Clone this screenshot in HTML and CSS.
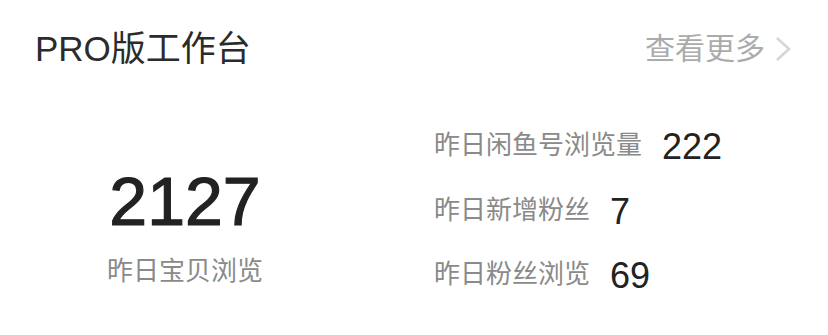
FILE: index.html
```html
<!DOCTYPE html>
<html>
<head>
  <title>PRO版工作台</title>
  <link rel="stylesheet" href="styles.css">
</head>
<body>
  <div class="card">
    <div class="head">
      <h2 class="title">PRO版工作台</h2>
      <a class="more" href="#">查看更多
        <svg class="arrow" width="18" height="26" viewBox="0 0 18 26">
          <path d="M3 2 L15 13 L3 24" fill="none" stroke="#d6d6d6" stroke-width="2.6"/>
        </svg>
      </a>
    </div>

    <div class="main">
      <div class="total">
        <div class="big">2127</div>
        <div class="label">昨日宝贝浏览</div>
      </div>
      <div class="stats">
        <div class="row"><span class="label">昨日闲鱼号浏览量</span><span class="num">222</span></div>
        <div class="row"><span class="label">昨日新增粉丝</span><span class="num">7</span></div>
        <div class="row"><span class="label">昨日粉丝浏览</span><span class="num">69</span></div>
      </div>
    </div>
  </div>
</body>
</html>
```

FILE: styles.css
```css
body {
  margin: 0;
  background-color: #fff;
  font-family: "Liberation Sans", "Noto Sans CJK SC", sans-serif;
}

.card {
  width: 828px;
  height: 335px;
}

.head {
  display: flex;
  justify-content: space-between;
  align-items: center;
  padding: 32px 36px 0 35px;
}

.title {
  margin: 0;
  font-size: 35px;
  font-weight: normal;
  line-height: 34px;
  color: #2b2b2b;
}

.more {
  display: flex;
  align-items: center;
  gap: 9px;
  font-size: 30px;
  line-height: 34px;
  color: #ababab;
  text-decoration: none;
}

.main {
  display: flex;
  padding-top: 58px;
}

.total {
  width: 370px;
  text-align: center;
  padding-top: 37px;
}

.big {
  font-size: 68px;
  line-height: 80px;
  color: #222;
  -webkit-text-stroke: 1.2px #222;
}

.total .label {
  margin-top: 12px;
}

.label {
  font-size: 26px;
  line-height: 36px;
  color: #8a8a8a;
}

.stats {
  margin-left: 64px;
  padding-top: 3px;
  display: flex;
  flex-direction: column;
  gap: 28.5px;
}

.row {
  display: flex;
  align-items: center;
  gap: 20px;
  height: 36px;
}

.num {
  font-size: 36px;
  line-height: 36px;
  color: #222;
  padding-top: 4px;
}
```
